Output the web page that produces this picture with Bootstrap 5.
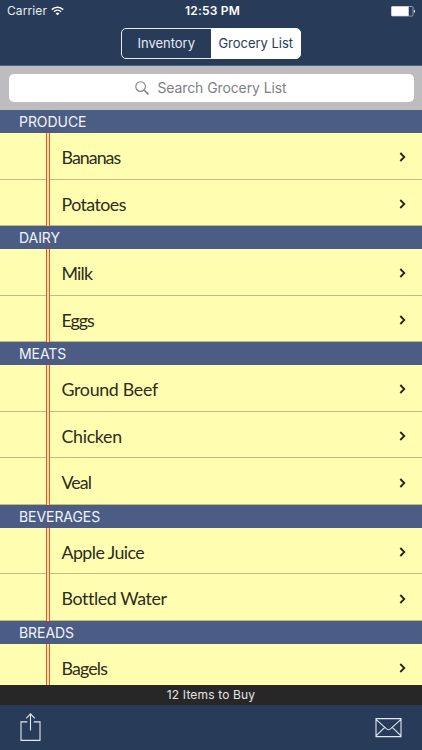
<!DOCTYPE html>
<html lang="en">
<head>
  <meta charset="UTF-8" />
  <meta name="viewport" content="width=device-width, initial-scale=1.0"/>
  <title>Grocery List</title>
  <link href="https://cdn.jsdelivr.net/npm/bootstrap@5.3.3/dist/css/bootstrap.min.css" rel="stylesheet" />
  <style>
    body {
      font-family: Inter, "Liberation Sans", sans-serif;
      background: #283b59;
      color: #fff;
    }
    .top-bar {
      height: 65.5px;
      background: #283b59;
      border-bottom: 1px solid #50607a;
    }
    .status-bar {
      height: 22px;
      padding: 0 7px;
      font-size: 12px;
      line-height: 22px;
    }
    .status-bar > div { flex: 1 1 0; }
    .carrier { letter-spacing: .1px; color: #e8ecf2; }
    .clock { padding-left: 3px; font-weight: 600; font-size: 12px; letter-spacing: .2px; }
    .segments { width: 180px; height: 31px; margin-top: 6px; }
    .segments .btn {
      --bs-btn-color: #e6ecf5;
      --bs-btn-border-color: #e6ecf5;
      --bs-btn-active-bg: #fff;
      --bs-btn-active-color: #283b59;
      --bs-btn-active-border-color: #fff;
      --bs-btn-border-radius: 5px;
      flex: 1 1 0;
      padding: 0;
      font-size: 13px;
      line-height: 29px;
      letter-spacing: -.02px;
      white-space: nowrap;
    }
    .search-bar { height: 44.6px; padding: 8px 8.5px 0; background: #bdbcbf; }
    .search-field {
      height: 28.7px;
      border-radius: 5px;
      background: #fff;
      color: #808084;
      font-size: 14px;
      line-height: 20px;
      letter-spacing: -.1px;
    }
    .section-title {
      height: 22.9px;
      padding-left: 19px;
      background: linear-gradient(90deg, #5b5377 1px, transparent 1px, transparent 3px, #5b5377 3px) 46px 0 / 4px 100% no-repeat #4b5d84;
      font-size: 14px;
      line-height: 23px;
      letter-spacing: -.06px;
      color: #f1f4fa;
    }
    .grocery-list { flex: 1 1 0; min-height: 0; }
    /* the two red margin lines of the note paper run over the rule of each row */
    .grocery-list .list-group-item {
      height: 46.6px;
      padding: 2px 16px 0 61.5px;
      border: 0;
      background:
        linear-gradient(90deg, #e05a30 1px, #ffe0a0 1px, #ffe0a0 3px, #e05a30 3px) 46px 0 / 4px 100% no-repeat,
        linear-gradient(#c2ba82, #c2ba82) 0 100% / 100% 1px no-repeat,
        #fffeb0;
      color: #2d2b20;
      font-family: Lato, "Open Sans", sans-serif;
      font-size: 17.8px;
    }
    .summary {
      height: 20.5px;
      background: #272727;
      color: #e4e4e4;
      font-size: 12px;
      line-height: 20px;
      letter-spacing: .15px;
    }
    .tool-bar { height: 45px; padding: 0 20px; }
    svg { display: block; fill: none; }
  </style>
</head>
<body>

<div class="d-flex flex-column vh-100 overflow-hidden">
  <header class="top-bar flex-shrink-0">
    <div class="status-bar d-flex align-items-center">
      <div class="carrier d-flex align-items-center">
        <span>Carrier</span>
        <svg class="ms-1" width="13" height="10" viewBox="0 0 13 10" stroke="#fff" stroke-width="1.5">
          <path d="M.8 3.6a8.2 8.2 0 0 1 11.4 0M2.9 5.8a5.2 5.2 0 0 1 7.2 0"/>
          <path d="M6.5 9.3 4.6 7.4a2.7 2.7 0 0 1 3.8 0z" fill="#fff" stroke="none"/>
        </svg>
      </div>
      <div class="clock text-center">12:53 PM</div>
      <div class="d-flex justify-content-end">
        <svg width="25" height="11" viewBox="0 0 25 11">
          <rect x="1.5" y=".5" width="21.5" height="9.6" rx="1" stroke="#a9b3c2" stroke-width=".8"/>
          <path d="M1.5.5h17.2v9.4H1.5z" fill="#fff"/>
          <path d="M23.9 3.6c1.4.6 1.4 2.8 0 3.4z" fill="#fff"/>
        </svg>
      </div>
    </div>
    <div class="segments btn-group d-flex mx-auto" role="group">
      <button type="button" class="btn">Inventory</button>
      <button type="button" class="btn active">Grocery List</button>
    </div>
  </header>

  <div class="search-bar flex-shrink-0">
    <div class="search-field d-flex align-items-center justify-content-center">
      <svg class="me-2" width="14" height="14" viewBox="0 0 14 14" stroke="#808084" stroke-width="1.1">
        <circle cx="5.6" cy="5.6" r="4.8"/>
        <path d="m9.2 9.2 4.2 4.2" stroke-width="1.6"/>
      </svg>
      <span>Search Grocery List</span>
    </div>
  </div>

  <main id="grocery-list" class="grocery-list overflow-hidden"></main>

  <div class="summary flex-shrink-0 text-center">12 Items to Buy</div>

  <footer class="tool-bar flex-shrink-0 d-flex align-items-center justify-content-between">
    <svg width="21" height="29" viewBox="0 0 21 29" stroke="#dfe8f5" stroke-width="1.1">
      <path d="M7.3 8.9H1v18.5h19V8.9h-6.2M10.5 17.5V.9M6.2 5.3 10.5.9l4.3 4.4"/>
    </svg>
    <svg width="27" height="20" viewBox="0 0 27 20" stroke="#dfe8f5" stroke-width="1.1">
      <path d="M1 .6h25v18H1zM1 1.3l10.2 9.4q2.3 2 4.6 0L26 1.3M1 17.9l8.7-8.5M26 17.9l-8.7-8.5"/>
    </svg>
  </footer>
</div>

<script>
// each item is [name, letter spacing in px]
const sections = [
  { title: "PRODUCE", items: [["Bananas", -0.95], ["Potatoes", -0.55]] },
  { title: "DAIRY", items: [["Milk", -0.8], ["Eggs", -1]] },
  { title: "MEATS", items: [["Ground Beef", -0.3], ["Chicken", -0.3], ["Veal", -0.9]] },
  { title: "BEVERAGES", items: [["Apple Juice", -0.55], ["Bottled Water", -0.4]] },
  { title: "BREADS", items: [["Bagels", -0.85]] }
];

function renderList() {
  document.getElementById("grocery-list").innerHTML = sections.map(section => `
    <section>
      <div class="section-title">${section.title}</div>
      <ul class="list-group list-group-flush">
        ${section.items.map(([name, spacing]) => `
          <li class="list-group-item d-flex align-items-center justify-content-between">
            <span style="letter-spacing: ${spacing}px">${name}</span>
            <svg width="7" height="10" viewBox="0 0 7 10" stroke="#25231b" stroke-width="1.8">
              <path d="m1.3 1 4 4-4 4"/>
            </svg>
          </li>
        `).join("")}
      </ul>
    </section>
  `).join("");
}

renderList();
</script>

<script src="https://cdn.jsdelivr.net/npm/bootstrap@5.3.3/dist/js/bootstrap.bundle.min.js"></script>
</body>
</html>
